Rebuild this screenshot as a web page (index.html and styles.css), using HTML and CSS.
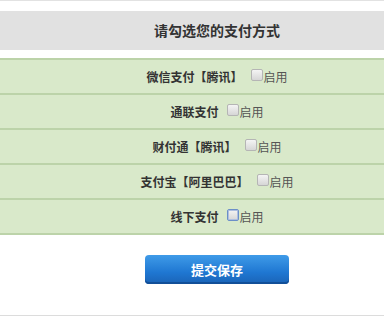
FILE: index.html
```html
<!DOCTYPE html>
<html>
<head>
<meta charset="utf-8">
<link rel="stylesheet" href="styles.css">
</head>
<body>
<div class="page">
  <div class="header">请勾选您的支付方式</div>
  <div class="list">
    <div class="row"><span class="label">微信支付【腾讯】</span><span class="cb"></span><span class="en">启用</span></div>
    <div class="row"><span class="label">通联支付</span><span class="cb"></span><span class="en">启用</span></div>
    <div class="row"><span class="label">财付通【腾讯】</span><span class="cb"></span><span class="en">启用</span></div>
    <div class="row"><span class="label">支付宝【阿里巴巴】</span><span class="cb"></span><span class="en">启用</span></div>
    <div class="row"><span class="label">线下支付</span><span class="cb cb-focus"></span><span class="en">启用</span></div>
  </div>
  <div class="actions"><button class="btn">提交保存</button></div>
</div>
</body>
</html>
```
FILE: styles.css
```css
html, body {
  margin: 0;
  padding: 0;
  background: #fff;
}
.page {
  border-top: 1px solid #e2e2e2;
  padding-top: 10px;
  font-family: "Noto Sans CJK SC", "Liberation Sans", sans-serif;
  color: #333;
}
.header {
  height: 39px;
  line-height: 39px;
  padding-left: 50px;
  background: #e1e1e1;
  text-align: center;
  font-size: 14px;
  font-weight: bold;
  color: #333;
}
.list {
  margin-top: 8px;
  border-bottom: 2px solid #bcd3a9;
}
.row {
  height: 33px;
  padding-left: 50px;
  border-top: 2px solid #bcd3a9;
  background: #d9e9ca;
  display: flex;
  align-items: center;
  justify-content: center;
  font-size: 12px;
}
.label {
  font-weight: bold;
  color: #333;
  margin-right: 8px;
}
.cb {
  width: 10px;
  height: 10px;
  border: 1px solid #b5b5b5;
  border-radius: 2px;
  background: linear-gradient(#f4f4f4, #d6d6d6);
  margin-top: -4px;
}
.cb-focus {
  border-color: #6c8fc8;
  box-shadow: inset 0 0 0 1px #aebfe0;
}
.en {
  color: #555;
  margin-left: 1px;
}
.actions {
  display: flex;
  justify-content: center;
  padding: 20px 0 31px 50px;
  border-bottom: 1px solid #dcdcdc;
}
.btn {
  width: 144px;
  height: 29px;
  border: none;
  border-radius: 4px;
  background: linear-gradient(#3f9be8, #1f77d2 60%, #1a63b6);
  box-shadow: inset 0 -2px 0 #124f98;
  color: #fff;
  font-family: "Noto Sans CJK SC", sans-serif;
  font-size: 13px;
  font-weight: bold;
  padding: 0;
}
```
